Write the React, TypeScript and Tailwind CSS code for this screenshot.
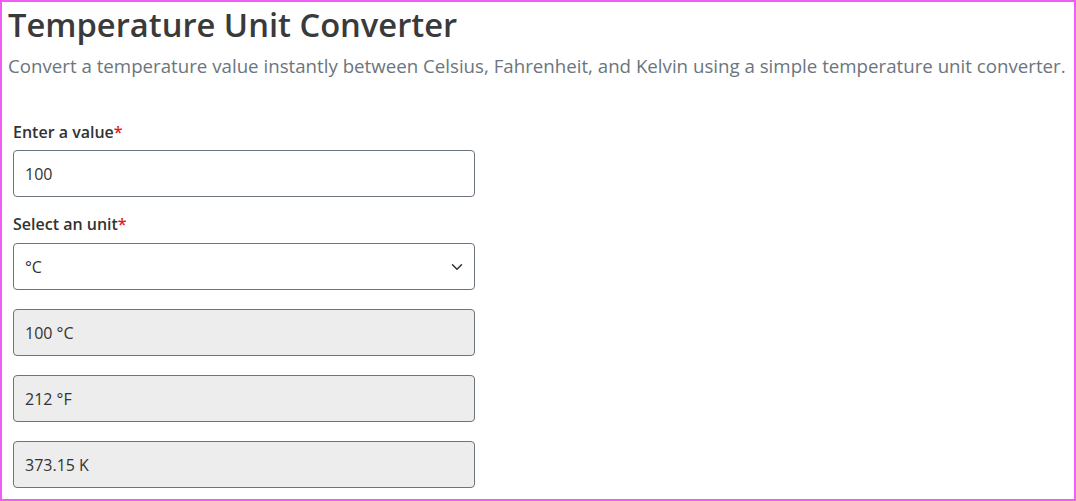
import { ChevronDown } from "lucide-react"

function Label({ text }: { text: string }) {
  return (
    <label className="block text-[16px] font-semibold leading-5 text-[#333]">
      {text}
      <span className="text-[#e01b1b]">*</span>
    </label>
  )
}

function Output({ value }: { value: string }) {
  return (
    <div className="flex h-[47px] items-center rounded-[4px] border border-[#6c757d] bg-[#ededed] px-[11px] text-[16px] text-[#333]">
      {value}
    </div>
  )
}

export default function App() {
  return (
    <div className="h-[501px] w-[1076px] border-2 border-[#f25cf5] bg-white font-['Open_Sans',sans-serif]">
      <div className="px-[6px] pt-[2px]">
        <h1 className="text-[32.7px] font-semibold leading-[42px] text-[#3a3a3a]">
          Temperature Unit Converter
        </h1>
        <p className="mt-[6px] whitespace-nowrap text-[18.7px] leading-[28px] text-[#6c757d]">
          Convert a temperature value instantly between Celsius, Fahrenheit, and Kelvin using a simple temperature unit converter.
        </p>
      </div>

      <form className="mt-[42px] flex w-[473px] flex-col pl-[11px]">
        <Label text="Enter a value" />
        <div className="mt-[8px] flex h-[47px] items-center rounded-[4px] border border-[#6c757d] bg-white px-[11px] text-[16px] text-[#333]">
          100
        </div>

        <div className="mt-[17px]">
          <Label text="Select an unit" />
        </div>
        <div className="mt-[9px] flex h-[47px] items-center justify-between rounded-[4px] border border-[#6c757d] bg-white pl-[11px] pr-[8px] text-[16px] text-[#333]">
          <span>°C</span>
          <ChevronDown className="h-[18px] w-[18px] text-[#333]" strokeWidth={2} />
        </div>

        <div className="mt-[19px] flex flex-col gap-[19px]">
          <Output value="100 °C" />
          <Output value="212 °F" />
          <Output value="373.15 K" />
        </div>
      </form>
    </div>
  )
}
